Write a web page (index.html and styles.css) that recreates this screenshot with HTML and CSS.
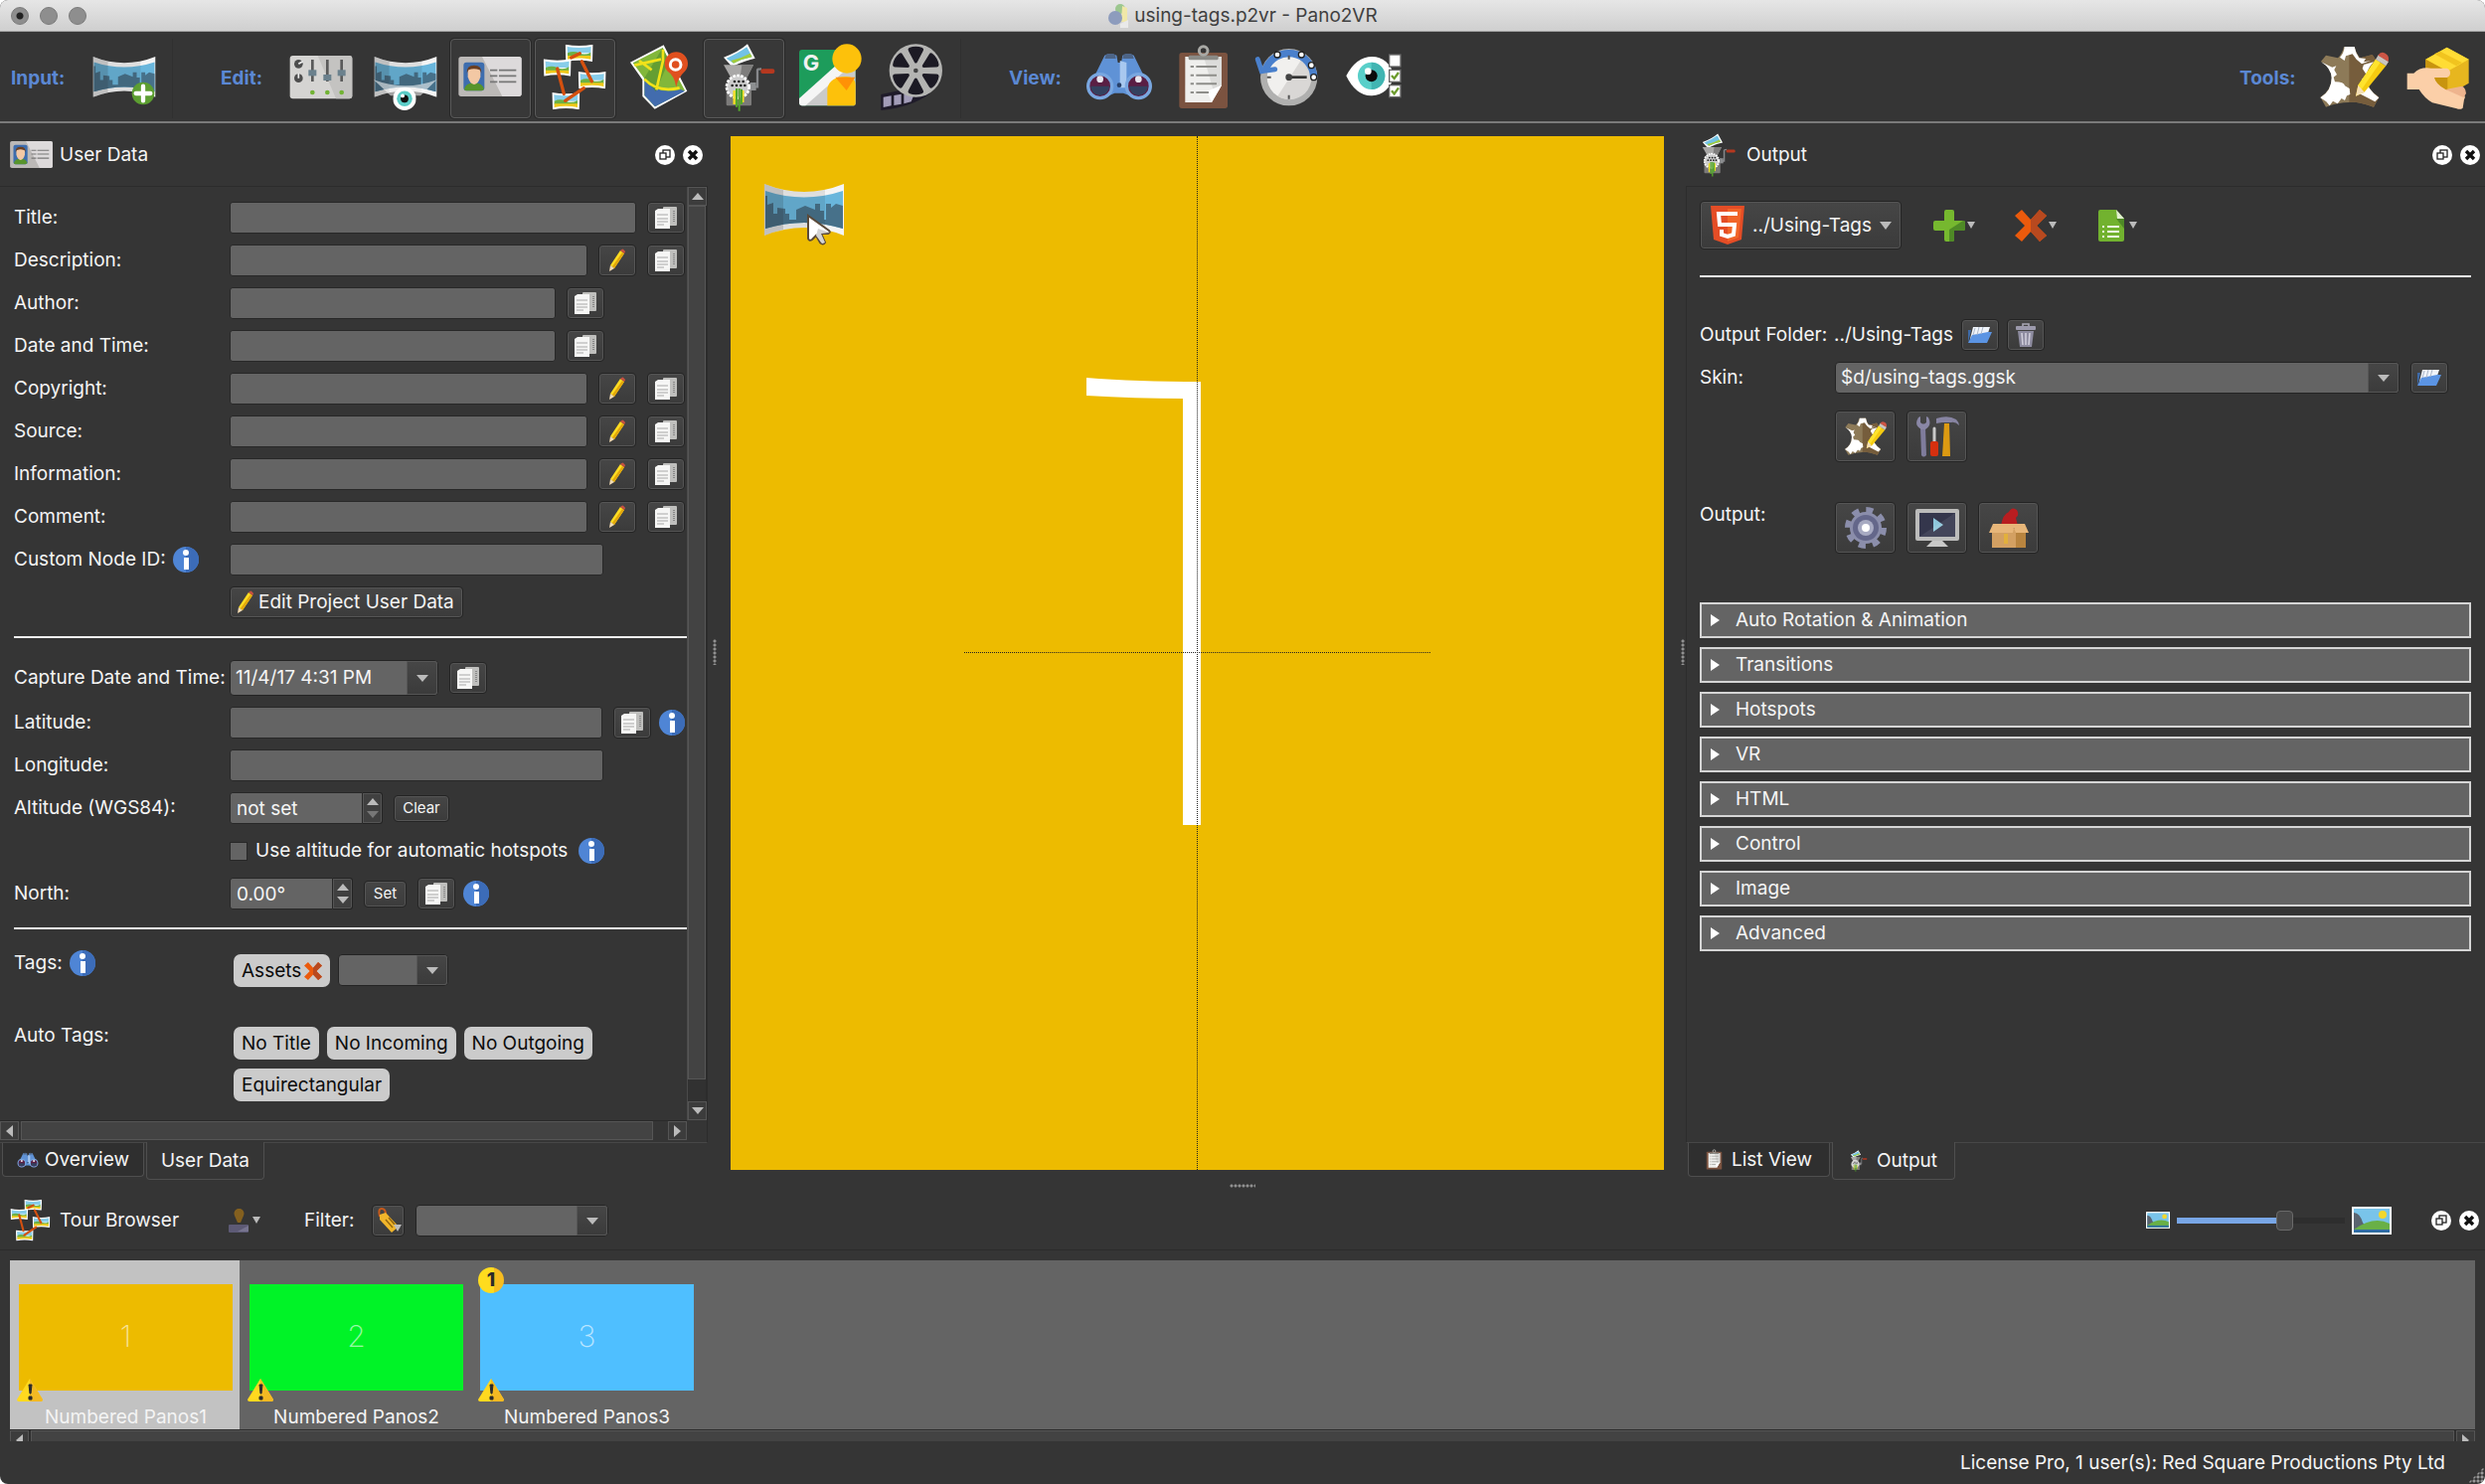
FILE: index.html
```html
<!DOCTYPE html>
<html lang="en">
<head>
<meta charset="UTF-8">
<meta name="viewport" content="width=device-width, initial-scale=1.0">
<title>using-tags.p2vr - Pano2VR</title>
<link rel="stylesheet" href="styles.css">
</head>
<body>

<!-- icon library -->
<svg class="library" aria-hidden="true">
  <defs>
    <symbol id="i-pano" viewBox="0 0 80 52">
      <path d="M0 0Q40 16 80 0V52Q40 36 0 52Z" fill="#f4f4f4"/>
      <path d="M1 7Q40 20 79 7V45Q40 33 1 45Z" fill="#69b6dc"/>
      <path d="M1 12h2v9l6-2v11h4v-6l8 1v5h4v6h7V26l9-4 10 4v-6h5v7h4v9h2V20h5v4l5-4 7 2V45Q40 33 1 45Z" fill="#47718a"/>
      <path d="M0 0Q10 4 19 6V46Q10 48 0 52Z" fill="#222" opacity=".25"/>
      <path d="M19 6Q40 10 61 6V46Q40 42 19 46Z" fill="#222" opacity=".1"/>
    </symbol>
    <symbol id="i-eye" viewBox="0 0 24 24">
      <circle cx="12" cy="12" r="12" fill="#fff"/><circle cx="12" cy="12" r="8" fill="#5bcdc8"/><circle cx="12" cy="12" r="4" fill="#111"/><circle cx="10" cy="9" r="2" fill="#fff"/>
    </symbol>
    <symbol id="i-add-pano" viewBox="0 0 240 240">
      <use href="#i-pano" x="24" y="54" width="192" height="122"/>
      <circle cx="177" cy="165" r="34" fill="#5c9e31"/>
      <path d="M177 143v44M155 165h44" stroke="#fff" stroke-width="13" stroke-linecap="round"/>
    </symbol>
    <symbol id="i-sliders" viewBox="0 0 240 240">
      <rect x="26" y="51" width="188" height="130" rx="9" fill="#d5d4d2"/>
      <path d="M110 51h96q8 0 8 9v112q0 9-9 9h-40Z" fill="#c4c3c1"/>
      <g stroke="#5a5a5a" stroke-width="8"><path d="M94 63v66M139 63v66M182 63v66"/></g>
      <g fill="#6b818d"><rect x="82" y="94" width="24" height="18"/><rect x="127" y="108" width="24" height="18"/><rect x="170" y="94" width="24" height="18"/></g>
      <g fill="#4d4d4d"><circle cx="52" cy="76" r="13"/><circle cx="52" cy="119" r="13"/></g>
      <path d="M52 76l13-8M52 119v-15" stroke="#eee" stroke-width="5"/>
      <g fill="#72b334"><circle cx="94" cy="162" r="7"/><circle cx="139" cy="162" r="7"/><circle cx="182" cy="162" r="7"/></g>
    </symbol>
    <symbol id="i-view-pano" viewBox="0 0 240 240">
      <use href="#i-pano" x="24" y="54" width="192" height="122"/>
      <path d="M24 124Q120 160 214 124L165 172H75Z" fill="#fff" opacity=".55"/>
      <use href="#i-eye" x="82" y="146" width="70" height="70"/>
    </symbol>
    <symbol id="i-card" viewBox="0 0 240 240">
      <rect x="25" y="54" width="190" height="120" rx="8" fill="#bcb9b7"/>
      <path d="M96 54h111q8 0 8 8v104q0 8-8 8h-50Z" fill="#dddadb"/>
      <rect x="40" y="71" width="63" height="86" rx="9" fill="#3d6dae"/>
      <path d="M42 152q4-18 30-20 26 2 30 20-4 5-9 5H49q-6 0-7-5Z" fill="#58942c"/>
      <path d="M53 95q19-14 38 0v20q-6 22-19 23-13-1-19-23Z" fill="#f3c8a4"/>
      <path d="M50 104q-2-24 22-24t22 24l-5-10q-18-6-34 0Z" fill="#6a3f22"/>
      <path d="M120 95h22M147 95h52M120 112h22M147 112h52M120 130h22M147 130h52" stroke="#777" stroke-width="5"/>
    </symbol>
    <symbol id="i-frame" viewBox="0 0 84 52">
      <path d="M0 0Q42 8 84 0L82 52Q42 44 2 52Z" fill="#fff"/>
      <path d="M6 7Q42 13 78 7L77 26H7Z" fill="#87cdea"/>
      <path d="M7 26Q25 18 42 26T77 24V36H7Z" fill="#6db144"/>
      <path d="M7 34H77V45Q42 38 7 45Z" fill="#efc91a"/>
    </symbol>
    <symbol id="i-tour" viewBox="0 0 240 240">
      <use href="#i-frame" x="92" y="17" width="84" height="52"/>
      <use href="#i-frame" x="26" y="61" width="84" height="52"/>
      <use href="#i-frame" x="131" y="99" width="84" height="52"/>
      <use href="#i-frame" x="52" y="162" width="84" height="52"/>
      <path d="M68 90l20 76M92 187l56-38M110 57l26-13M142 68l30 60" stroke="#d4500f" stroke-width="10" stroke-linecap="round"/>
    </symbol>
    <symbol id="i-map" viewBox="0 0 240 240">
      <path d="M33 71L134 19 205 158 107 212 70 174V124Z" fill="#fff"/>
      <path d="M41 73L131 27 165 95 198 156 108 205 76 171V120Z" fill="#82b73a"/>
      <path d="M76 126Q115 170 186 153l12 5-90 47-32-34Z" fill="#426cae"/>
      <path d="M75 120L131 27 150 65 110 160Z" fill="#4d8a2b" opacity=".55"/>
      <path d="M46 80l80-18M60 66l38 28M132 32v34l-20 88M76 122q40 42 106 26" fill="none" stroke="#f1e219" stroke-width="8"/>
      <path d="M172 146Q166 110 146 98A35 35 0 1 1 198 98Q176 118 172 146Z" fill="#e0501f"/>
      <circle cx="170" cy="78" r="16" fill="none" stroke="#fff" stroke-width="9"/>
    </symbol>
    <symbol id="i-grinder" viewBox="0 0 240 240">
      <path d="M60 56Q105 40 132 16L155 59Q128 64 85 84Z" fill="#fff"/>
      <path d="M68 59Q104 44 130 25L146 55Q118 60 90 74Z" fill="#72c2e4"/>
      <path d="M82 66Q115 58 140 44l6 11Q118 60 90 74Z" fill="#a2cc3c"/>
      <path d="M60 79H150L130 118H82Z" fill="#a9a8a7"/><path d="M115 79h35l-20 39h-20Z" fill="#7e7d7c"/>
      <rect x="68" y="138" width="76" height="64" rx="4" fill="#7c7b7a"/>
      <path d="M140 145h22v-50q0-4 12-4" fill="none" stroke="#86888b" stroke-width="7"/>
      <rect x="140" y="132" width="18" height="24" fill="#8c8e90"/>
      <rect x="172" y="91" width="42" height="14" rx="6" fill="#b5381f"/>
      <circle cx="103" cy="145" r="34" fill="#ccc" stroke="#fff" stroke-width="8" stroke-dasharray="8 4"/>
      <g fill="#222"><circle cx="93" cy="129" r="4"/><circle cx="106" cy="129" r="4"/><circle cx="119" cy="129" r="4"/><circle cx="86" cy="141" r="4"/><circle cx="99" cy="141" r="4"/><circle cx="112" cy="141" r="4"/><circle cx="124" cy="141" r="4"/></g>
      <path d="M92 156v42M118 156v36" stroke="#f2df21" stroke-width="7"/>
      <path d="M99 150v56M107 150v68M114 152v46" stroke="#55a82a" stroke-width="6"/>
    </symbol>
    <symbol id="i-street" viewBox="0 0 240 240">
      <rect x="33" y="33" width="170" height="169" rx="9" fill="#1d9c5b"/>
      <path d="M160 75l43-30v149q0 8-8 8H40Z" fill="#cacaca"/>
      <path d="M33 180L150 75l25 18L52 202H41q-8 0-8-9Z" fill="#f5f5f5"/>
      <path d="M118 202v-52q8-36 56-36 29 0 29 26v54q0 8-8 8Z" fill="#fdc10b"/>
      <path d="M142 116h60l-26 40Z" fill="#ff9106"/>
      <circle cx="177" cy="60" r="44" fill="#fdc10b"/>
      <text x="44" y="96" class="g-letter">G</text>
    </symbol>
    <symbol id="i-film" viewBox="0 0 240 240">
      <path d="M25 168L110 150 172 166Q120 206 25 216Z" fill="#1f1b2a"/>
      <path d="M32 176l24-4v30l-24 5ZM64 171l22-4v30l-22 4ZM94 168l30 2-8 20-22 6Z" fill="#a29cb8"/>
      <circle cx="130" cy="96" r="80" fill="#b4b4b2"/>
      <g fill="#1c1a24"><path id="spoke" d="M110 27q20-8 40 0 6 4 2 10l-18 34q-4 5-8 0l-18-34q-4-6 2-10Z"/><use href="#spoke" transform="rotate(60 130 96)"/><use href="#spoke" transform="rotate(120 130 96)"/><use href="#spoke" transform="rotate(180 130 96)"/><use href="#spoke" transform="rotate(240 130 96)"/><use href="#spoke" transform="rotate(300 130 96)"/></g>
      <circle cx="130" cy="96" r="20" fill="#b4b4b2"/><circle cx="130" cy="96" r="7" fill="#444"/>
    </symbol>
    <symbol id="i-binoculars" viewBox="0 0 240 240">
      <path d="M76 50q16-8 36 0l4 22h10l4-22q18-8 34 0l44 90-50 34-26-10h-26l-22 10-54-30Z" fill="#5f92d6"/>
      <path d="M80 48q14-6 28 0l2 12H76ZM132 48q14-6 28 0l4 12h-34Z" fill="#4d6486"/>
      <path d="M122 66v82h20V72Z" fill="#a8c8ef"/>
      <circle cx="62" cy="143" r="36" fill="#5a1f44" stroke="#79a7e0" stroke-width="10"/>
      <circle cx="178" cy="143" r="36" fill="#5a1f44" stroke="#79a7e0" stroke-width="10"/>
      <path d="M34 143a28 28 0 0 0 56 0Z" fill="#33415f"/><path d="M150 143a28 28 0 0 0 56 0Z" fill="#33415f"/>
      <circle cx="62" cy="122" r="10" fill="#e8e6ee"/><circle cx="178" cy="122" r="10" fill="#e8e6ee"/>
      <circle cx="120" cy="140" r="7" fill="#27406a"/>
    </symbol>
    <symbol id="i-clipboard" viewBox="0 0 240 240">
      <rect x="46" y="42" width="146" height="168" rx="8" fill="#7b5340"/>
      <path d="M64 54H174V140L144 192H64Z" fill="#efefed"/>
      <path d="M120 54h54v86l-20 34Z" fill="#dcdcda"/>
      <path d="M174 140l-30 52-14-34Z" fill="#fff"/>
      <rect x="74" y="50" width="90" height="14" rx="5" fill="#8b8b87"/>
      <circle cx="119" cy="36" r="13" fill="none" stroke="#a9a9a5" stroke-width="9"/>
      <path d="M80 84h10M97 84h62M80 110h10M97 110h62M80 136h10M97 136h62M80 162h10M97 162h38" stroke="#8e8e8a" stroke-width="6"/>
    </symbol>
    <symbol id="i-clock" viewBox="0 0 240 240">
      <circle cx="122" cy="116" r="86" fill="#b0b0af"/><circle cx="122" cy="116" r="66" fill="#f1f0ee"/>
      <path d="M160 62A66 66 0 0 1 88 173Z" fill="#d9d7d5"/>
      <path d="M52 92A75 75 0 0 1 197 116" fill="none" stroke="#4a80cc" stroke-width="22"/>
      <path d="M28 62l12 36 40-6" fill="none" stroke="#4a80cc" stroke-width="15" stroke-linecap="round"/>
      <path d="M122 50v12M122 170v12M56 116h12" stroke="#555" stroke-width="6"/>
      <path d="M122 116h54" stroke="#333" stroke-width="8"/><circle cx="122" cy="116" r="10" fill="#444"/>
      <g fill="#fff" stroke="#222" stroke-width="4"><circle cx="87" cy="48" r="9"/><circle cx="160" cy="48" r="9"/><circle cx="190" cy="80" r="9"/><circle cx="197" cy="116" r="9"/></g>
    </symbol>
    <symbol id="i-eyelist" viewBox="0 0 240 240">
      <path d="M40 112Q70 54 118 54T186 112Q166 170 118 172T40 112Z" fill="#fff"/>
      <circle cx="116" cy="112" r="41" fill="#59cfc9"/><path d="M116 71a41 41 0 0 1 0 82Z" fill="#41b5b2"/><circle cx="116" cy="112" r="18" fill="#0b0b0b"/><circle cx="106" cy="98" r="10" fill="#fff"/>
      <g fill="#fff" stroke="#666" stroke-width="4"><rect x="170" y="48" width="34" height="36"/><rect x="170" y="94" width="34" height="36"/><rect x="170" y="140" width="34" height="36"/></g>
      <path d="M177 111l8 9 13-18M177 157l8 9 13-18" fill="none" stroke="#6d9c2e" stroke-width="7"/>
    </symbol>
    <symbol id="i-skin" viewBox="0 0 240 240">
      <path d="M36 50l36 8q14-14 18-34h32q4 20 18 34l36-10 12 18q-30 30-30 54 0 32 38 56l-16 30q-50-18-74-14-34 0-70 14L19 176q34-20 34-58 0-30-32-50Z" fill="#8d7a58"/>
      <path d="M106 24h16q4 20 18 34l36-10 12 18q-30 30-30 54 0 32 38 56l-16 30q-50-18-74-14Z" fill="#765d3c"/>
      <path d="M21 70l34 16 12-4-6 12 8 14-10 8 4 14q28 0 30 12l14 8 2 18-10 4-6 14-10-6-12 16-14-8-10 14-10-12-18-12q34-20 34-60-2-30-32-48ZM78 56q12-12 14-32h30q4 20 14 34l20 2-6 10 22-4-28 10-16-14-12-16-20 6-4 14ZM150 78l30-8q-24 26-22 50 0 30 38 58l-12 12-26-14-28-14 10-18 20-14-16-8 14-14-12-18Z" fill="#fff"/>
      <path d="M133 140L186 62l31 20L152 161l-26 12Z" fill="#f5cb11"/><path d="M133 140L186 62l14 9-58 84Z" fill="#ffe32e"/>
      <path d="M186 62l8-13 31 20-8 13Z" fill="#c9c5bf"/><path d="M193 50q8-13 22-6t9 25Z" fill="#cc5545"/>
      <path d="M126 173l7-33 19 21Z" fill="#f5dfb8"/>
    </symbol>
    <symbol id="i-hand" viewBox="0 0 240 240">
      <path d="M146 26L212 62V134L148 170 82 134V62Z" fill="#e7b61f"/>
      <path d="M146 26L212 62 148 98 82 62Z" fill="#ffdc35"/><path d="M126 38l66 34-18 10-66-36Z" fill="#f1c41f"/>
      <path d="M148 98V170L82 134V62Z" fill="#c8940f"/>
      <path d="M26 104h20q20-20 52-15h48q10 3 10 14t-10 14H108q4 20 34 36l54 14q8 8 2 16l-4 26q-8 6-18 2l-74-18q-24-14-40-40H26Z" fill="#fbcfa8"/>
      <path d="M142 153l50-10q10 4 12 22l-8 12Z" fill="#eeb48e"/>
    </symbol>
    <symbol id="i-copy" viewBox="0 0 22 24">
      <rect x="8" y="1" width="14" height="19" rx="1" fill="#bfbfbd"/><path d="M19 5v12" stroke="#888" stroke-width="2" stroke-dasharray="1 1"/>
      <path d="M0 5l3-2h12v20H0Z" fill="#f6f6f5"/><path d="M2 9h11M2 13h11M2 16h11M2 19h7" stroke="#a8a8a8"/>
    </symbol>
    <symbol id="i-pencil" viewBox="0 0 18 24">
      <path d="M2 17L12 2l4 3L6 20Z" fill="#ffdd22"/><path d="M14 4l2 1L6 20l-2-2Z" fill="#e3a80c"/><path d="M12 2q3-3 4 0 2 1 0 3Z" fill="#c65140"/><path d="M1 23l1-6 4 3Z" fill="#f3dcb4"/>
    </symbol>
    <symbol id="i-info" viewBox="0 0 26 26">
      <circle cx="13" cy="13" r="13" fill="#4f85d5"/><path d="M13 0a13 13 0 0 1 0 26Z" fill="#3c6cb8"/>
      <circle cx="13" cy="6" r="3" fill="#fff"/><rect x="11" y="11" width="5" height="12" fill="#fff"/>
    </symbol>
    <symbol id="i-float" viewBox="0 0 20 20">
      <circle cx="10" cy="10" r="10" fill="#fff"/><rect x="8" y="5" width="7" height="7" fill="none" stroke="#222" stroke-width="1.3"/><rect x="5" y="8" width="6" height="6" fill="#fff" stroke="#222" stroke-width="1.3"/>
    </symbol>
    <symbol id="i-close" viewBox="0 0 20 20">
      <circle cx="10" cy="10" r="10" fill="#fff"/><path d="M6 6l8 8M14 6l-8 8" stroke="#111" stroke-width="3.4"/>
    </symbol>
    <symbol id="i-x" viewBox="0 0 32 32">
      <path d="M0 6L7 0 16 10 25 0 32 6 22 16 32 26 25 32 16 22 7 32 0 26 10 16Z" fill="#eb5a0c"/><path d="M16 10L25 0 32 6 22 16 32 26 25 32 16 22Z" fill="#b8491f"/>
    </symbol>
    <symbol id="i-plus" viewBox="0 0 32 32">
      <path d="M11 2q0-2 2-2h6q2 0 2 2v9h9q2 0 2 2v6q0 2-2 2h-9v9q0 2-2 2h-6q-2 0-2-2v-9H2q-2 0-2-2v-6q0-2 2-2h9Z" fill="#76b82f"/><path d="M32 19q0 2-2 2h-9v9q0 2-2 2h-3V20l14-9q2 0 2 2Z" fill="#4f8a26"/>
    </symbol>
    <symbol id="i-doc" viewBox="0 0 26 32">
      <path d="M0 2q0-2 2-2h16l8 9v21q0 2-2 2H2q-2 0-2-2Z" fill="#72b22f"/><path d="M18 0l8 9h-7Z" fill="#e1f0d0"/><path d="M18 9h8v10Z" fill="#4f8a26"/>
      <path d="M4 17h2M9 17h12M4 22h2M9 22h12M4 27h2M9 27h12" stroke="#f1f8e8" stroke-width="2"/>
    </symbol>
    <symbol id="i-html5" viewBox="0 0 34 39">
      <path d="M0 0H34L31 34 17 39 3 34Z" fill="#e44d26"/><path d="M17 3H31L28 32 17 36Z" fill="#f16529"/>
      <path d="M27 8H8l1 11h15l-1 10-6 2-6-2v-5" fill="none" stroke="#fff" stroke-width="4"/>
    </symbol>
    <symbol id="i-folder" viewBox="0 0 24 18">
      <path d="M5 1h17l-4 12H2Z" fill="#f0f4fa"/><path d="M3 4L0 17V4Z" fill="#3d6aa8"/><path d="M4 9l16-3h4l-5 11H0Z" fill="#5b94e3"/><path d="M7 2l-2 7M11 1l-2 8M15 1l-2 7" stroke="#aab6c8"/>
    </symbol>
    <symbol id="i-trash" viewBox="0 0 20 24">
      <path d="M7 3V1h6v2" fill="none" stroke="#a8a6b4" stroke-width="1.6"/><rect y="3" width="20" height="4" rx="1" fill="#9c9aac"/><path d="M2 8h16l-2 16H4Z" fill="#8e8ca0"/><path d="M6 10l1 12M10 10v12M14 10l-1 12" stroke="#cfcdda" stroke-width="1.6"/>
    </symbol>
    <symbol id="i-tools" viewBox="0 0 44 42">
      <path d="M5 12h5l1 28q-3 3-5 0Z" fill="#7f7c9c"/><path d="M3 2q-5 8 3 12h4q7-4 3-12l-2-1v6q-3 3-6 0V1Z" fill="#8a87a6"/>
      <path d="M19 13v13" stroke="#c9c9c9" stroke-width="3" stroke-linecap="round"/><rect x="15" y="26" width="8" height="15" rx="2" fill="#d5300f"/>
      <path d="M29 8h5l1 33h-8Z" fill="#dc9a12"/><path d="M21 3q12-4 20 1 3 3 3 6-4-4-8-3h-9l-6 1Z" fill="#8784a2"/>
    </symbol>
    <symbol id="i-gear" viewBox="0 0 42 42">
      <circle cx="21" cy="21" r="18" fill="none" stroke="#8b8eab" stroke-width="6" stroke-dasharray="7 7.1"/>
      <circle cx="21" cy="21" r="16" fill="#8b8eab"/><circle cx="21" cy="21" r="13" fill="#64678a"/><circle cx="21" cy="21" r="8" fill="#a7aac2"/><circle cx="21" cy="21" r="4" fill="#fff"/>
    </symbol>
    <symbol id="i-monitor" viewBox="0 0 44 38">
      <rect width="44" height="32" rx="2" fill="#bcbcbb"/><rect x="4" y="4" width="36" height="24" fill="#34364c"/><path d="M18 9l10 7-10 7Z" fill="#8ec7dc"/><path d="M17 32h10l6 6H11Z" fill="#c9c9c8"/><path d="M4 28L40 4v24Z" fill="#fff" opacity=".08"/>
    </symbol>
    <symbol id="i-box" viewBox="0 0 40 42">
      <path d="M12 19q2-12 8-14 3-6 8-2 3 5-1 8l2 8Z" fill="#b81d20"/><path d="M3 22h34v19H3Z" fill="#d3a062"/><path d="M27 22h10v19H27Z" fill="#b8843f"/><path d="M4 17h32l4 9H27l-2-5-1 5H0Z" fill="#e7b679"/><path d="M15 27h4v10h-4Z" fill="#e2b03c"/>
    </symbol>
    <symbol id="i-stamp" viewBox="0 0 20 24">
      <path d="M6 7a5 5 0 1 1 9 0l-3 7h-3Z" fill="#84601f"/><rect y="16" width="20" height="8" rx="1" fill="#5d5a75"/><path d="M20 17v6H9Z" fill="#77748f"/>
    </symbol>
    <symbol id="i-tag" viewBox="0 0 24 26">
      <path d="M3 9Q1 1 5 1t4 6" fill="none" stroke="#c85a1b" stroke-width="2"/><path d="M3 7l6-2L22 19l-7 6L3 12Z" fill="#f0b52b"/><path d="M9 12l7 8M12 10l6 7" stroke="#93660f" stroke-width="1.4"/>
    </symbol>
    <symbol id="i-photo" viewBox="0 0 40 28">
      <rect width="40" height="28" fill="#fff"/><rect x="2" y="2" width="36" height="24" fill="#79c4ea"/><circle cx="31" cy="8" r="4" fill="#f3d72d"/><path d="M2 6q6 0 9 10l6 8H2Z" fill="#5a6470"/><path d="M2 23q20-14 36-6v9H2Z" fill="#69b046"/><path d="M2 23h36v3H2Z" fill="#2f6da3"/>
    </symbol>
    <symbol id="i-warn" viewBox="0 0 26 23">
      <path d="M13 0L26 21q0 2-2 2H2q-2 0-2-2Z" fill="#ffd91f"/><path d="M13 0L26 21q0 2-2 2H13Z" fill="#f3b923"/><path d="M12 6h3l-1 9h-1ZM12 18h3v3h-3Z" fill="#2b2b2b" stroke="#2b2b2b"/>
    </symbol>
  </defs>
</svg>

<div class="window">

<header class="titlebar">
  <div class="lights"><span class="dirty"></span><span></span><span></span></div>
  <svg class="app-icon" viewBox="0 0 20 24"><circle cx="12" cy="5" r="5" fill="#9cc78f"/><path d="M14 2l5 2v14h-6Z" fill="#f0e7a8"/><circle cx="7" cy="14" r="7" fill="#8d9cbd"/><path d="M12 20l8-4v8h-8Z" fill="#e9e9e9"/></svg>
  <h1>using-tags.p2vr - Pano2VR</h1>
</header>

<nav class="toolbar">
  <div class="group">
    <span class="name name-input">Input:</span>
    <button aria-label="Add panorama"><svg><use href="#i-add-pano"/></svg></button>
  </div>
  <div class="group divided">
    <span class="name name-edit">Edit:</span>
    <button aria-label="Properties"><svg><use href="#i-sliders"/></svg></button>
    <button aria-label="Viewing parameters"><svg><use href="#i-view-pano"/></svg></button>
    <button class="on" aria-label="User data"><svg><use href="#i-card"/></svg></button>
    <button class="on" aria-label="Tour browser"><svg><use href="#i-tour"/></svg></button>
    <button aria-label="Tour map"><svg><use href="#i-map"/></svg></button>
    <button class="on" aria-label="Output"><svg><use href="#i-grinder"/></svg></button>
    <button aria-label="Street View"><svg><use href="#i-street"/></svg></button>
    <button aria-label="Animation"><svg><use href="#i-film"/></svg></button>
  </div>
  <div class="group divided">
    <span class="name name-view">View:</span>
    <button aria-label="Overview"><svg><use href="#i-binoculars"/></svg></button>
    <button aria-label="List view"><svg><use href="#i-clipboard"/></svg></button>
    <button aria-label="History"><svg><use href="#i-clock"/></svg></button>
    <button aria-label="Viewer options"><svg><use href="#i-eyelist"/></svg></button>
  </div>
  <div class="group tools">
    <span class="name name-tools">Tools:</span>
    <button aria-label="Skin editor"><svg><use href="#i-skin"/></svg></button>
    <button aria-label="Package viewer"><svg><use href="#i-hand"/></svg></button>
  </div>
</nav>

<main>
  <section class="dock">
    <div class="dock-head">
      <svg class="head-card" viewBox="25 54 190 120"><use href="#i-card" width="240" height="240"/></svg>
      <h2>User Data</h2>
      <button class="round" aria-label="Float"><svg><use href="#i-float"/></svg></button>
      <button class="round" aria-label="Close"><svg><use href="#i-close"/></svg></button>
    </div>

    <div class="scroll-area">
      <form class="userdata">
        <div class="rows">
          <div class="row"><label for="title">Title:</label><input id="title" class="grow"><button type="button" class="btn small" aria-label="Copy"><svg class="copy"><use href="#i-copy"/></svg></button></div>
          <div class="row"><label for="desc">Description:</label><input id="desc" class="grow"><button type="button" class="btn small" aria-label="Edit"><svg class="pencil"><use href="#i-pencil"/></svg></button><button type="button" class="btn small" aria-label="Copy"><svg class="copy"><use href="#i-copy"/></svg></button></div>
          <div class="row"><label for="author">Author:</label><input id="author" class="medium"><button type="button" class="btn small" aria-label="Copy"><svg class="copy"><use href="#i-copy"/></svg></button></div>
          <div class="row"><label for="date">Date and Time:</label><input id="date" class="medium"><button type="button" class="btn small" aria-label="Copy"><svg class="copy"><use href="#i-copy"/></svg></button></div>
          <div class="row"><label for="copyright">Copyright:</label><input id="copyright" class="grow"><button type="button" class="btn small" aria-label="Edit"><svg class="pencil"><use href="#i-pencil"/></svg></button><button type="button" class="btn small" aria-label="Copy"><svg class="copy"><use href="#i-copy"/></svg></button></div>
          <div class="row"><label for="source">Source:</label><input id="source" class="grow"><button type="button" class="btn small" aria-label="Edit"><svg class="pencil"><use href="#i-pencil"/></svg></button><button type="button" class="btn small" aria-label="Copy"><svg class="copy"><use href="#i-copy"/></svg></button></div>
          <div class="row"><label for="information">Information:</label><input id="information" class="grow"><button type="button" class="btn small" aria-label="Edit"><svg class="pencil"><use href="#i-pencil"/></svg></button><button type="button" class="btn small" aria-label="Copy"><svg class="copy"><use href="#i-copy"/></svg></button></div>
          <div class="row"><label for="comment">Comment:</label><input id="comment" class="grow"><button type="button" class="btn small" aria-label="Edit"><svg class="pencil"><use href="#i-pencil"/></svg></button><button type="button" class="btn small" aria-label="Copy"><svg class="copy"><use href="#i-copy"/></svg></button></div>
          <div class="row"><label for="nodeid">Custom Node ID: <svg class="info"><use href="#i-info"/></svg></label><input id="nodeid" class="long"></div>
          <div class="row"><span class="label"></span><button type="button" class="btn edit-project"><svg class="pencil"><use href="#i-pencil"/></svg>Edit Project User Data</button></div>
        </div>

        <hr>

        <div class="rows">
          <div class="row tall"><label for="capture">Capture Date and Time:</label><span class="combo capture"><select id="capture"><option>11/4/17 4:31 PM</option></select></span><button type="button" class="btn small" aria-label="Copy"><svg class="copy"><use href="#i-copy"/></svg></button></div>
          <div class="row"><label for="lat">Latitude:</label><input id="lat" class="long"><button type="button" class="btn small" aria-label="Copy"><svg class="copy"><use href="#i-copy"/></svg></button><svg class="info"><use href="#i-info"/></svg></div>
          <div class="row"><label for="lon">Longitude:</label><input id="lon" class="long"></div>
          <div class="row"><label for="alt">Altitude (WGS84):</label><span class="spin altitude"><input id="alt" value="not set"><span class="steps"><button type="button" class="up" aria-label="Up"></button><button type="button" class="down dim" aria-label="Down"></button></span></span><button type="button" class="btn mini clear">Clear</button></div>
          <div class="row"><span class="label"></span><label class="check"><input type="checkbox">Use altitude for automatic hotspots</label><svg class="info"><use href="#i-info"/></svg></div>
          <div class="row"><label for="north">North:</label><span class="spin north"><input id="north" value="0.00°"><span class="steps"><button type="button" class="up" aria-label="Up"></button><button type="button" class="down" aria-label="Down"></button></span></span><button type="button" class="btn mini set">Set</button><button type="button" class="btn small" aria-label="Copy"><svg class="copy"><use href="#i-copy"/></svg></button><svg class="info"><use href="#i-info"/></svg></div>
        </div>

        <hr>

        <div class="tag-row">
          <label for="tags">Tags: <svg class="info"><use href="#i-info"/></svg></label>
          <div class="chips"><span class="chip">Assets<button type="button" aria-label="Remove tag"><svg><use href="#i-x"/></svg></button></span><span class="combo tag-combo"><select id="tags"><option></option></select></span></div>
        </div>
        <div class="tag-row auto">
          <span class="label">Auto Tags:</span>
          <div class="chips"><span class="chip">No Title</span><span class="chip">No Incoming</span><span class="chip">No Outgoing</span><span class="chip">Equirectangular</span></div>
        </div>
      </form>
      <div class="vbar"><button class="up" aria-label="Scroll up"></button><span class="thumb"></span><button class="down" aria-label="Scroll down"></button></div>
      <div class="hbar"><button class="left" aria-label="Scroll left"></button><span class="thumb"></span><button class="right" aria-label="Scroll right"></button></div>
    </div>

    <div class="tabs">
      <button><svg class="tab-icon" viewBox="16 38 208 150"><use href="#i-binoculars" width="240" height="240"/></svg>Overview</button>
      <button class="active">User Data</button>
    </div>
  </section>

  <div class="splitter split-left"><i></i></div>

  <section class="viewer">
    <svg class="pano-badge"><use href="#i-pano"/></svg>
    <svg class="pointer" viewBox="0 0 26 32"><path d="M2 2v23q1 3 4 1l4-4 4 7q3 3 5 0l-4-9h7q3-1 1-3Z" fill="#fff" stroke="#5b4a3a" stroke-width="2"/><path d="M12 15l12 4-9 1 4 9-3 1-6-8Z" fill="#d4d4d4"/></svg>
    <!-- the big painted digit in the panorama -->
    <svg class="digit" viewBox="0 0 116 450"><path d="M0 0Q50 4 115 4V450H97V21Q50 21 0 18Z" fill="#fff"/></svg>
    <span class="cross-v"></span>
    <span class="cross-h"></span>
  </section>

  <div class="splitter split-right"><i></i></div>

  <section class="dock right-dock">
    <div class="dock-head">
      <svg class="head-grinder" viewBox="56 14 160 206"><use href="#i-grinder" width="240" height="240"/></svg>
      <h2>Output</h2>
      <button class="round" aria-label="Float"><svg><use href="#i-float"/></svg></button>
      <button class="round" aria-label="Close"><svg><use href="#i-close"/></svg></button>
    </div>

    <div class="output-panel">
      <div class="output-top">
        <button class="btn format"><svg class="html5"><use href="#i-html5"/></svg>../Using-Tags<i class="caret"></i></button>
        <button class="flat" aria-label="Add output"><svg class="plus"><use href="#i-plus"/></svg><i class="caret tiny"></i></button>
        <button class="flat" aria-label="Remove output"><svg class="plus"><use href="#i-x"/></svg><i class="caret tiny"></i></button>
        <button class="flat" aria-label="Presets"><svg class="doc"><use href="#i-doc"/></svg><i class="caret tiny"></i></button>
      </div>
      <hr>
      <div class="out-row folder"><span class="label">Output Folder:</span><span>../Using-Tags</span><button class="btn small" aria-label="Open folder"><svg class="dir"><use href="#i-folder"/></svg></button><button class="btn small" aria-label="Delete"><svg class="trash"><use href="#i-trash"/></svg></button></div>
      <div class="out-row skin"><label for="skin">Skin:</label><span class="combo grow"><select id="skin"><option>$d/using-tags.ggsk</option></select></span><button class="btn small" aria-label="Open skin"><svg class="dir"><use href="#i-folder"/></svg></button></div>
      <div class="out-row big"><span class="label"></span><button class="btn large" aria-label="Edit skin"><svg viewBox="14 16 216 196"><use href="#i-skin" width="240" height="240"/></svg></button><button class="btn large" aria-label="Skin settings"><svg><use href="#i-tools"/></svg></button></div>
      <div class="out-row big generate"><span class="label">Output:</span><button class="btn large" aria-label="Generate"><svg><use href="#i-gear"/></svg></button><button class="btn large" aria-label="Preview"><svg><use href="#i-monitor"/></svg></button><button class="btn large" aria-label="Package"><svg><use href="#i-box"/></svg></button></div>

      <div class="sections">
        <details><summary>Auto Rotation &amp; Animation</summary></details>
        <details><summary>Transitions</summary></details>
        <details><summary>Hotspots</summary></details>
        <details><summary>VR</summary></details>
        <details><summary>HTML</summary></details>
        <details><summary>Control</summary></details>
        <details><summary>Image</summary></details>
        <details><summary>Advanced</summary></details>
      </div>
    </div>

    <div class="tabs">
      <button><svg class="tab-clip" viewBox="40 16 158 198"><use href="#i-clipboard" width="240" height="240"/></svg>List View</button>
      <button class="active"><svg class="tab-grinder" viewBox="56 14 160 206"><use href="#i-grinder" width="240" height="240"/></svg>Output</button>
    </div>
  </section>
</main>

<div class="splitter split-bottom"><i></i></div>

<section class="browser">
  <div class="browser-head">
    <svg class="head-tour" viewBox="24 14 194 202"><use href="#i-tour" width="240" height="240"/></svg>
    <h2>Tour Browser</h2>
    <button class="flat stamp-btn" aria-label="Stamp"><svg class="stamp"><use href="#i-stamp"/></svg><i class="caret tiny"></i></button>
    <label for="filter">Filter:</label>
    <button class="btn tag-btn" aria-label="Filter by tag"><svg><use href="#i-tag"/></svg><i class="caret tiny"></i></button>
    <span class="combo filter"><select id="filter"><option></option></select></span>
    <div class="zoomer">
      <svg class="photo-s"><use href="#i-photo"/></svg>
      <input type="range" min="0" max="100" value="66" aria-label="Thumbnail size">
      <svg class="photo-l"><use href="#i-photo"/></svg>
    </div>
    <button class="round" aria-label="Float"><svg><use href="#i-float"/></svg></button>
    <button class="round" aria-label="Close"><svg><use href="#i-close"/></svg></button>
  </div>
  <div class="list-frame">
    <div class="thumbs">
      <figure class="selected"><div class="thumb-img orange">1<svg class="warn"><use href="#i-warn"/></svg></div><figcaption>Numbered Panos1</figcaption></figure>
      <figure><div class="thumb-img green">2<svg class="warn"><use href="#i-warn"/></svg></div><figcaption>Numbered Panos2</figcaption></figure>
      <figure><div class="thumb-img blue">3<svg class="warn"><use href="#i-warn"/></svg><b class="first">1</b></div><figcaption>Numbered Panos3</figcaption></figure>
    </div>
    <div class="hbar list-bar"><button class="left" aria-label="Scroll left"></button><span class="thumb"></span><button class="right" aria-label="Scroll right"></button></div>
  </div>
</section>

<footer>
  <span>License Pro, 1 user(s): Red Square Productions Pty Ltd</span>
  <i class="grip"></i>
</footer>

</div>
</body>
</html>
```

FILE: styles.css
```css
* {box-sizing:border-box;}
html {background:#fff;}
body {margin:0; font-family:Inter, "Liberation Sans", sans-serif; font-size:19px; line-height:26px; color:#f4f4f4;}
h1, h2 {margin:0; font-size:inherit; font-weight:400;}
button, input, select {font:inherit; color:inherit; margin:0;}
button {padding:0; border:0; background:none; cursor:pointer;}
svg {display:block; flex:none;}
hr {margin:0; border:0; height:2px; background:#f0f0f0;}
.library {position:absolute; width:0; height:0;}
.window {display:flex; flex-direction:column; min-height:100vh; background:#353535; border-radius:8px; overflow:hidden;}
.grow {flex:1; min-width:0;}

/* Title bar */
.titlebar {position:relative; display:flex; align-items:center; justify-content:center; gap:5px; height:32px; background:linear-gradient(#e6e6e6, #cfcfcf); border-bottom:1px solid #a0a0a0; color:#404040;}
.lights {position:absolute; left:11px; top:7px; display:flex; gap:11px;}
.lights span {width:18px; height:18px; border-radius:50%; background:#8e8e8e; border:1px solid #7b7b7b;}
.lights .dirty {background:radial-gradient(#222 3px, #8e8e8e 4px);}
.app-icon {width:22px; height:24px;}

/* Toolbar */
.toolbar {display:flex; height:92px; padding:7px 6px 0 11px; border-bottom:2px solid #7a7a7a;}
.group {display:flex; gap:4px; height:80px; align-items:center;}
.group button {width:81px; height:80px; border-radius:4px;}
.group button svg {width:80px; height:80px;}
.group .on {border:1px solid #5a5a5a; box-shadow:0 0 0 1px #282828; background:#383838;}
.group .on svg {margin:-1px;}
.divided {margin-left:7px; padding-left:48px; border-left:1px solid #303030;}
.tools {margin-left:auto;}
.name {color:#5b88d3; font-weight:700;}
.name-input {width:70px;}
.name-edit {width:57px;}
.name-view {width:67px;}
.name-tools {width:71px;}
.g-letter {font:700 66px Inter, sans-serif; fill:#f1f1f1;}

/* Docks */
main {flex:1; display:grid; grid-template-columns:712fr 23px 939fr 22px 804fr;}
.dock {display:flex; flex-direction:column; min-width:0;}
.dock-head {display:flex; align-items:center; height:63px; padding-left:10px;}
.dock-head h2 {margin:0 auto 0 7px;}
.head-card {width:43px; height:27px;}
.head-grinder {width:36px; height:44px; margin-left:5px;}
.right-dock .dock-head h2 {margin-left:10px;}
.round {margin-right:8px;}
.round svg {width:20px; height:20px;}
.dock .round:last-child {margin-right:5px;}
.scroll-area {flex:1; display:grid; grid-template:1fr 22px / minmax(0, 1fr) 20px; border:1px solid #2c2c2c; border-left:0; border-bottom-color:#474747;}

/* Form */
.userdata {padding:15px 0 0 14px;}
.rows {display:flex; flex-direction:column; gap:11px; padding-right:2px;}
.row {display:flex; align-items:center; gap:11px; height:32px;}
.tall {height:36px;}
.row > label:first-child, .row > .label, .tag-row > label, .tag-row > .label {display:flex; align-items:center; gap:7px; width:206px; flex:none; white-space:nowrap;}
.userdata hr {margin:18px 0 22px;}
input:not([type]) {height:32px; padding:0 6px; border:1px solid #282828; border-radius:3px; background:#646464; outline:0;}
.medium {width:328px;}
.long {width:376px;}
.btn {display:flex; align-items:center; justify-content:center; flex:none; height:32px; border:1px solid #242424; border-radius:4px; background:linear-gradient(#464646, #3b3b3b); box-shadow:inset 0 0 0 1px #555;}
.small {width:38px;}
.mini {height:27px; font-size:15px;}
.clear {width:56px;}
.set {width:43px;}
.edit-project {gap:4px; padding:0 8px 0 6px;}
.copy {width:22px; height:24px;}
.pencil {width:18px; height:24px;}
.info {width:26px; height:26px;}
.small + .info {margin-left:-3px;}
.combo {position:relative; display:flex; height:32px;}
.combo select {appearance:none; width:100%; padding:0 36px 0 5px; border:1px solid #242424; border-radius:4px; background:#646464; outline:0;}
.combo::before {content:""; position:absolute; right:1px; top:1px; bottom:1px; width:29px; border:1px solid #565656; border-radius:0 3px 3px 0; background:linear-gradient(#464646, #3b3b3b); pointer-events:none;}
.combo::after {content:""; position:absolute; right:10px; top:50%; margin-top:-3px; border:6px solid transparent; border-top:7px solid #bbb; border-bottom:0; pointer-events:none;}
.capture {width:210px; height:36px;}
.tag-combo {width:111px;}
.filter {width:194px;}
.spin {display:flex; height:32px;}
.spin input:not([type]) {width:100%; border-radius:3px 0 0 3px;}
.altitude {width:154px;}
.north {width:124px;}
.steps {display:flex; flex-direction:column; justify-content:space-evenly; align-items:center; width:20px; flex:none; border:1px solid #242424; border-left:0; border-radius:0 3px 3px 0; background:#404040; box-shadow:inset 0 0 0 1px #555;}
.steps .up {border:6px solid transparent; border-bottom:7px solid #bbb; border-top:0;}
.steps .down {border:6px solid transparent; border-top:7px solid #bbb; border-bottom:0;}
.steps .dim {border-top-color:#777;}
.check {display:flex; align-items:center; gap:8px;}
.check input {appearance:none; width:18px; height:19px; background:#646464; border:1px solid #282828;}
.tag-row {display:flex; align-items:flex-start; padding-top:3px;}
.tag-row > label, .tag-row > .label {width:221px !important; margin-top:-4px;}
.auto {padding-top:40px;}
.chips {display:flex; flex-wrap:wrap; gap:9px 8px;}
.chip {display:flex; align-items:center; height:33px; padding:0 8px; border-radius:7px; background:#cbcbcb; color:#0c0c0c;}
.chip svg {width:18px; height:18px; margin-left:3px;}

/* Scroll bars */
.vbar {display:flex; flex-direction:column; border-left:1px solid #4a4a4a; border-right:1px solid #2c2c2c; background:#313131;}
.vbar .thumb {flex:1; margin-bottom:22px;}
.thumb {border:1px solid #565656; background:#434343;}
.vbar button, .hbar button {display:flex; align-items:center; justify-content:center; flex:none; width:19px; height:19px; border:1px solid #555; background:#3c3c3c;}
.hbar {display:flex; align-items:stretch; height:20px; border-top:1px solid #2a2a2a;}
.hbar .thumb {flex:1; margin:0 15px 0 2px;}
.vbar button::before, .hbar button::before {content:""; border:6px solid transparent;}
.vbar .up::before {border-bottom:7px solid #bbb; border-top:0;}
.vbar .down::before {border-top:7px solid #bbb; border-bottom:0;}
.hbar .left::before {border-right:7px solid #bbb; border-left:0;}
.hbar .right::before {border-left:7px solid #bbb; border-right:0;}

/* Tabs */
.tabs {display:flex; align-items:flex-start; gap:2px; height:38px; padding-left:2px;}
.tabs button {display:flex; align-items:center; height:34px; padding:0 14px; border:1px solid #4f4f4f; border-top:0; border-radius:0 0 4px 4px; background:#2f2f2f; gap:6px;}
.tabs .active {height:38px; margin-top:-1px; background:#353535;}
.right-dock .tabs button {padding:0 17px; gap:9px;}
.tab-icon {width:22px; height:18px;}
.tab-clip {width:17px; height:21px;}
.tab-grinder {width:18px; height:22px;}

/* Splitters */
.splitter {display:flex; align-items:center;}
.splitter i {width:4px; height:26px; background:radial-gradient(#909090 1px, transparent 2px) 0 0 / 4px 4px;}
.split-left {padding-left:5px;}
.split-right {justify-content:flex-end; padding-right:1px;}
.split-bottom {justify-content:center; height:10px;}
.split-bottom i {width:26px; height:4px;}

/* Panorama view */
.viewer {position:relative; margin:13px 0 11px; background:#edbb00; overflow:hidden;}
.pano-badge {position:absolute; left:34px; top:48px; width:80px; height:52px;}
.pointer {position:absolute; left:76px; top:78px; width:26px; height:32px;}
.digit {position:absolute; right:50%; top:243px; width:116px; height:450px; margin-right:-4px;}
.cross-v {position:absolute; left:50%; top:0; bottom:0; margin-left:-1px; border-left:1px dotted #222;}
.cross-h {position:absolute; left:25%; right:25%; top:50%; margin-top:-1px; border-top:1px dotted #222;}

/* Output dock */
.output-panel {flex:1; padding:14px 14px 0 13px; border:1px solid #2c2c2c; border-right:0; border-bottom-color:#474747;}
.output-top {display:flex; align-items:center; height:49px;}
.format {height:49px; width:203px; justify-content:flex-start; gap:8px; padding-left:10px; margin-right:32px;}
.format .caret {margin-left:auto; margin-right:9px;}
.html5 {width:34px; height:39px;}
.caret {border:6px solid transparent; border-top:8px solid #bbb; border-bottom:0;}
.tiny {border-width:7px 4px 0;}
.flat {display:flex; align-items:center; gap:2px; margin-right:40px;}
.plus {width:32px; height:32px;}
.doc {width:26px; height:32px; margin:0 3px 0 2px;}
.output-panel hr {margin:26px 0 42px;}
.out-row {display:flex; align-items:center; gap:11px; margin-bottom:11px;}
.out-row > label, .out-row > .label {width:125px; flex:none; white-space:nowrap;}
.folder {gap:8px;}
.folder > .label {width:127px;}
.skin {padding-right:23px; margin-bottom:17px;}
.dir {width:24px; height:18px;}
.trash {width:20px; height:24px;}
.big {margin-bottom:40px;}
.generate {align-items:flex-start; margin-bottom:49px;}
.large {width:61px; height:52px;}
.large svg {width:44px; height:42px;}
.sections {display:flex; flex-direction:column; gap:9px;}
summary {display:flex; align-items:center; height:36px; padding-left:9px; border:2px solid #d5d5d5; background:#646464; cursor:pointer;}
summary::before {content:""; margin-right:16px; border:6px solid transparent; border-left:9px solid #fff; border-right:0;}

/* Tour browser */
.browser-head {display:flex; align-items:center; height:60px; padding-left:10px; border-bottom:1px solid #2b2b2b;}
.browser-head h2 {margin:0 50px 0 9px;}
.browser-head .round:last-child {margin-right:6px;}
.head-tour {width:41px; height:43px;}
.stamp {width:20px; height:24px; margin-right:2px;}
.stamp-btn {margin-right:44px;}
.tag-btn {position:relative; width:33px; margin:0 11px 0 18px;}
.tag-btn svg {width:24px; height:26px;}
.tag-btn .caret {position:absolute; right:2px; bottom:4px;}
.zoomer {display:flex; align-items:center; gap:7px; margin-left:auto; margin-right:40px;}
.photo-s {width:24px; height:17px;}
.photo-l {width:40px; height:28px;}
.zoomer input {appearance:none; width:169px; height:20px; margin:0; background:linear-gradient(90deg, #78a6e6 62%, #2e2e2e 62%) center / 100% 6px no-repeat;}
.zoomer input::-webkit-slider-thumb {appearance:none; width:17px; height:20px; border:1px solid #6a6a6a; border-radius:4px; background:#484848;}
.list-frame {margin:10px 10px 0; background:#646464;}
.thumbs {display:flex; gap:1px; height:170px;}
figure {margin:0; width:231px; padding:24px 7px 0 9px; text-align:center;}
.selected {background:#c2c2c2;}
.thumb-img {position:relative; display:flex; align-items:center; justify-content:center; height:107px; padding-bottom:4px; font-size:30px; font-weight:200; color:rgba(255,255,255,.6);}
.orange {background:#edbb00;}
.green {background:#00f327;}
.blue {background:#4fbfff;}
figcaption {margin-top:14px; white-space:nowrap;}
.warn {position:absolute; left:-2px; bottom:-11px; width:26px; height:23px;}
.first {position:absolute; left:-2px; top:-17px; width:26px; height:26px; border-radius:50%; background:linear-gradient(90deg, #ffdc1e 60%, #f7bd20 60%); color:#2b2b2b; font-size:19px; line-height:26px; font-weight:800;}
.list-bar {height:12px; overflow:hidden; background:#303030;}
.list-bar .thumb {margin:0 2px; border-bottom:0;}
footer {display:flex; align-items:center; justify-content:flex-end; height:43px; padding-right:40px; position:relative;}
.grip {position:absolute; right:1px; bottom:1px; width:16px; height:16px; background:radial-gradient(#999 1px, transparent 2px) 0 0 / 4px 4px; clip-path:polygon(100% 0, 100% 100%, 0 100%);}
```
